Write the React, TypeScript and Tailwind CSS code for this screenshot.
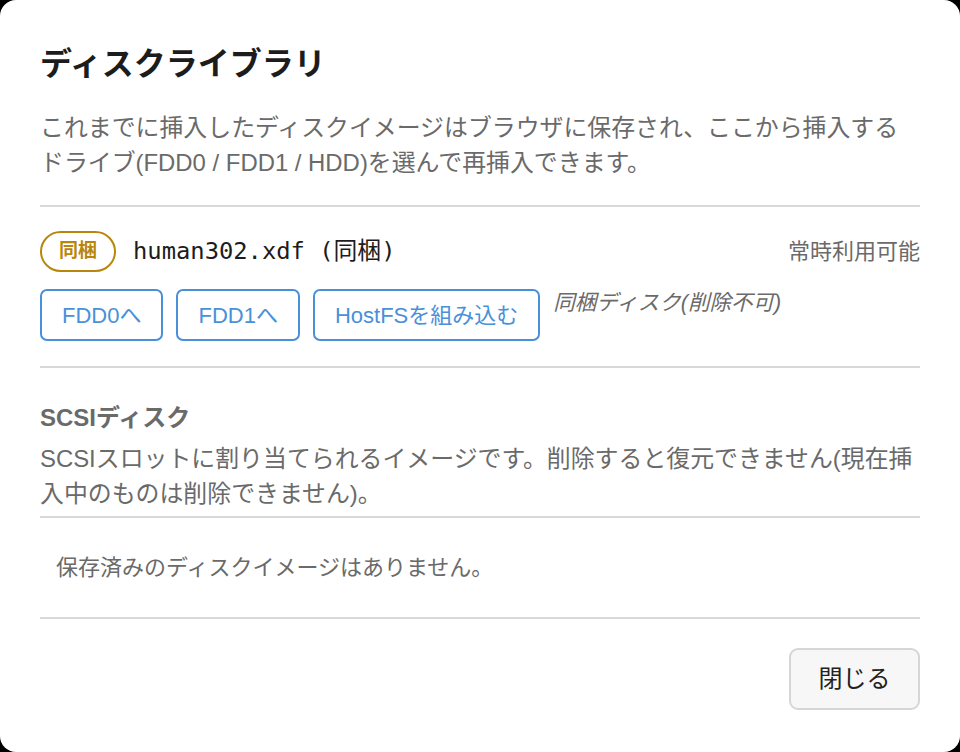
const SANS = 'font-["Liberation_Sans","Noto_Sans_CJK_JP",sans-serif]'
const MONO = 'font-["DejaVu_Sans_Mono","Noto_Sans_CJK_JP",monospace]'

const DRIVES = ['FDD0へ', 'FDD1へ', 'HostFSを組み込む']

export default function App() {
  return (
    <div className={`w-[960px] h-[752px] bg-black ${SANS}`}>
      <div className="h-full bg-white rounded-[16px] px-10 pt-[44px]">
        <h1 className="text-[32px] leading-[40px] font-bold text-[#1c1c1c]">ディスクライブラリ</h1>
        <p className="mt-[26px] text-[23.9px] leading-[35px] text-[#6a6a6a]">
          これまでに挿入したディスクイメージはブラウザに保存され、ここから挿入するドライブ(FDD0 / FDD1 / HDD)を選んで再挿入できます。
        </p>

        <div className="mt-[25px] h-[2px] bg-[#d8d8d8]" />

        {/* bundled disk */}
        <div className="pt-[24px] pb-[25px]">
          <div className="flex items-center justify-between">
            <div className="flex items-center gap-[17px]">
              <span className="h-[41px] w-[76px] flex items-center justify-center rounded-full border-2 border-[#b8860b] text-[#b8860b] text-[19px] font-bold">
                同梱
              </span>
              <span className={`${MONO} text-[23.8px] text-[#1c1c1c]`}>human302.xdf (同梱)</span>
            </div>
            <span className="text-[22px] text-[#6a6a6a]">常時利用可能</span>
          </div>
          <div className="mt-[17px] flex items-start gap-[13px]">
            {DRIVES.map((d) => (
              <button
                key={d}
                className="h-[52px] px-[20px] border-2 border-[#4a90d9] rounded-[7px] bg-white text-[22px] text-[#4a90d9]"
              >
                {d}
              </button>
            ))}
            <span className="text-[21.5px] leading-[28px] italic text-[#6a6a6a]">同梱ディスク(削除不可)</span>
          </div>
        </div>

        <div className="h-[2px] bg-[#d8d8d8]" />

        {/* SCSI */}
        <h2 className="mt-[32px] text-[24px] leading-[35px] font-bold text-[#6a6a6a]">SCSIディスク</h2>
        <p className="mt-[6px] text-[23.9px] leading-[35px] text-[#6a6a6a]">
          SCSIスロットに割り当てられるイメージです。削除すると復元できません(現在挿入中のものは削除できません)。
        </p>

        <div className="mt-[5px] h-[2px] bg-[#d8d8d8]" />
        <div className="px-4 py-[33px] text-[22px] leading-[33px] text-[#6a6a6a]">
          保存済みのディスクイメージはありません。
        </div>
        <div className="h-[2px] bg-[#d8d8d8]" />

        <div className="mt-[29px] flex justify-end">
          <button className="h-[62px] w-[131px] rounded-[9px] border-2 border-[#d6d6d6] bg-[#f7f7f7] text-[24px] text-[#222]">
            閉じる
          </button>
        </div>
      </div>
    </div>
  )
}
